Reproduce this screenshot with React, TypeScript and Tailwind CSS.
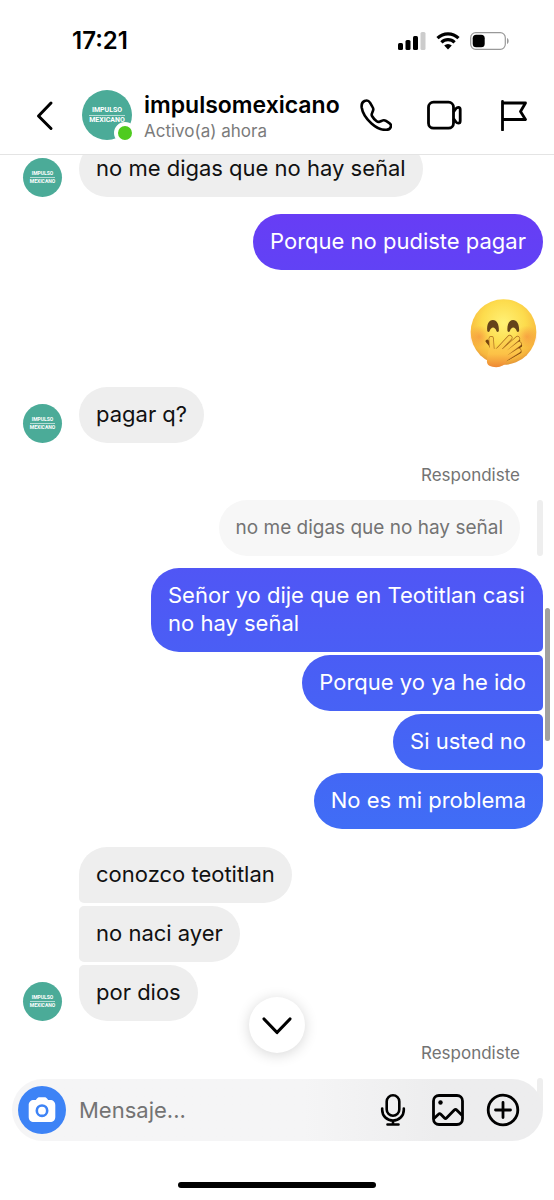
import { useState } from "react";
import type { ReactNode } from "react";
import clsx from "clsx";

interface Message {
  text: string;
  shape: string;
}

interface BubbleProps {
  children: ReactNode;
  className?: string;
}

const replies: Message[] = [
  {
    text: "Señor yo dije que en Teotitlan casi no hay señal",
    shape: "rounded-[28px] rounded-br-[5px] from-[#5056f5] to-[#4a5ef5]",
  },
  {
    text: "Porque yo ya he ido",
    shape: "rounded-[28px] rounded-r-[5px] from-[#4a5df5] to-[#4762f5]",
  },
  {
    text: "Si usted no",
    shape: "rounded-[28px] rounded-r-[5px] from-[#4762f5] to-[#4367f5]",
  },
  {
    text: "No es mi problema",
    shape: "rounded-[28px] rounded-tr-[5px] from-[#4367f5] to-[#406df6]",
  },
];

function Logo({ large = false }: { large?: boolean }) {
  return (
    <div
      className={clsx(
        "flex shrink-0 flex-col items-center justify-center rounded-full bg-[#4bab98] text-center font-['Liberation_Sans_Narrow','Roboto',sans-serif] font-bold text-white",
        large ? "size-[50px] text-[7px]" : "size-[39px] text-[5px]"
      )}
    >
      <span className={large ? "leading-[9px]" : "leading-[7px]"}>IMPULSO</span>
      <span
        className={clsx(
          "border-t border-white/60",
          large ? "leading-[9px]" : "leading-[7px]"
        )}
      >
        MEXICANO
      </span>
    </div>
  );
}

function Received({ children, className = "rounded-[28px]" }: BubbleProps) {
  return (
    <p
      className={clsx(
        "bg-[#eeeeee] px-[17px] pt-[13px] pb-[15px] text-[22px] leading-7 text-[#111111]",
        className
      )}
    >
      {children}
    </p>
  );
}

function Sent({ children, className }: BubbleProps) {
  return (
    <p
      className={clsx(
        "max-w-[392px] bg-linear-to-b px-[17px] pt-[13px] pb-[15px] text-[22px] leading-7 text-white",
        className
      )}
    >
      {children}
    </p>
  );
}

function ReplyLabel() {
  return (
    <p className="mt-[22px] mb-[15px] pr-[23px] text-right text-[17px] leading-5 text-[#737373]">
      Respondiste
    </p>
  );
}

function GiggleEmoji() {
  return (
    <svg
      viewBox="88 52 202 210"
      className="h-[70px] w-[67px]"
      role="img"
      aria-label="Cara con la mano sobre la boca"
    >
      <defs>
        <radialGradient id="face" cx="0.5" cy="0.36" r="0.66">
          <stop offset="0" stopColor="#fff176" />
          <stop offset="0.5" stopColor="#fddc4d" />
          <stop offset="0.85" stopColor="#f7b63d" />
          <stop offset="1" stopColor="#de8d35" />
        </radialGradient>
        <radialGradient id="blush">
          <stop offset="0" stopColor="#f47a3c" stopOpacity="0.5" />
          <stop offset="1" stopColor="#f47a3c" stopOpacity="0" />
        </radialGradient>
        <linearGradient
          id="hand"
          gradientUnits="userSpaceOnUse"
          x1="0"
          y1="160"
          x2="0"
          y2="260"
        >
          <stop offset="0" stopColor="#fddb55" />
          <stop offset="0.6" stopColor="#fcc247" />
          <stop offset="1" stopColor="#ee8834" />
        </linearGradient>
      </defs>
      <circle cx="189" cy="154" r="99" fill="url(#face)" />
      <circle cx="116" cy="168" r="34" fill="url(#blush)" />
      <circle cx="260" cy="168" r="34" fill="url(#blush)" />
      {/* eyes */}
      <path
        d="M140 151c-2-20 5-33 17-33s19 13 18 33c-2 4-5 4-7 1-5-15-16-15-21 0-2 3-5 3-7-1z"
        fill="#65431a"
      />
      <path
        d="M201 151c-2-20 5-33 17-33s19 13 18 33c-2 4-5 4-7 1-5-15-16-15-21 0-2 3-5 3-7-1z"
        fill="#65431a"
      />
      {/* open mouth showing between the fingers */}
      <path
        d="M140 182l10 12M200 204l34-25M204 219l36-24M204 233l34-19"
        stroke="#74430f"
        strokeWidth="10"
        strokeLinecap="round"
      />
      {/* hand: shaded edges first, then the skin */}
      <g fill="none" strokeLinecap="round" strokeLinejoin="round">
        <path
          d="M160 222L208 171M172 226L231 174M180 232L236 190M184 242L235 210M156 240L152 174"
          stroke="#a9681c"
          strokeWidth="16"
        />
        <path
          d="M160 222L208 171M172 226L231 174M180 232L236 190M184 242L235 210M156 240L152 174"
          stroke="url(#hand)"
          strokeWidth="12"
        />
      </g>
      <path
        d="M146 200c4 2 10 4 17 5 14-4 24-1 32 8 8 9 10 18 5 28-6 12-17 19-33 19-17 0-28-6-28-17 0-15 4-28 7-43z"
        fill="url(#hand)"
      />
    </svg>
  );
}

function StatusBar() {
  return (
    <div className="flex h-[76px] items-start justify-between pt-[27px] pr-[45px] pl-[72px]">
      <span className="text-2xl leading-7 font-semibold">17:21</span>
      <div className="flex h-7 items-center gap-[10px]">
        <svg viewBox="0 0 28 18" className="h-[18px] w-7">
          <rect x="0" y="11" width="5" height="7" rx="1.5" />
          <rect x="7.5" y="8" width="5" height="10" rx="1.5" />
          <rect x="15" y="4" width="5" height="14" rx="1.5" />
          <rect x="22.5" width="5" height="18" rx="1.5" fill="#cccccc" />
        </svg>
        <svg viewBox="0 0 24 18" className="h-[18px] w-6">
          <path
            d="M1.5 6.2a15 15 0 0 1 21 0M5.4 10.4a9.4 9.4 0 0 1 13.2 0"
            fill="none"
            stroke="black"
            strokeWidth="3.2"
          />
          <path d="M12 17.5l-3.8-3.900a5.4 5.4 0 0 1 7.6 0z" />
        </svg>
        <svg viewBox="0 0 39 18" className="h-[18px] w-[39px]">
          <rect
            x="0.7"
            y="0.7"
            width="34.6"
            height="16.6"
            rx="5"
            fill="none"
            stroke="#999999"
            strokeWidth="1.2"
          />
          <rect x="2.7" y="2.7" width="12" height="12.6" rx="3.5" />
          <path d="M37 6v6c2.200-1 2.200-5 0-6z" fill="#999999" />
        </svg>
      </div>
    </div>
  );
}

function ChatHeader() {
  return (
    <header className="border-b border-[#e4e4e4] bg-white">
      <StatusBar />
      <div className="flex h-[78px] items-center pr-6 pl-[29px]">
        <button type="button" aria-label="Volver" className="mr-[21px]">
          <svg
            viewBox="0 0 32 32"
            className="size-8"
            fill="none"
            stroke="black"
            strokeWidth="3"
            strokeLinecap="round"
            strokeLinejoin="round"
          >
            <path d="M22 4L9.500 17 22 29.500" />
          </svg>
        </button>
        <div className="relative">
          <Logo large />
          <span className="absolute -right-1 -bottom-1 size-[22px] rounded-full border-4 border-white bg-[#4fcb1f]"></span>
        </div>
        <div className="ml-3 min-w-0 flex-1 pt-1">
          <h1 className="text-[23px] leading-7 font-semibold">
            impulsomexicano
          </h1>
          <p className="text-[17px] leading-6 text-[#7b7b7b]">
            Activo(a) ahora
          </p>
        </div>
        <div className="flex gap-[37px]">
          <button type="button" aria-label="Llamar">
            <svg
              viewBox="0 0 32 32"
              className="size-8"
              fill="none"
              stroke="black"
              strokeWidth="2.6"
              strokeLinejoin="round"
            >
              <path d="M4.500 2C2.200 3 1.300 5.200 1.700 8.500 2.500 14 6.500 20 11.500 24.500c5 4.500 10.500 6.700 15 6.300 2.300-.2 4-1.500 4.400-3.300.3-1.400-.2-2.500-1.600-3.400l-3.300-2.200c-1.300-.8-2.600-.9-4-.2l-2.500 1c-1 .4-1.900.2-2.800-.5-2.100-1.600-3.700-3.400-4.700-5.200-.5-1-.5-1.700 0-2.700l1-2.500c.5-1.300.4-2.500-.4-3.700L10 3.600C8.700 1.600 6.700 1 4.500 2z" />
            </svg>
          </button>
          <button type="button" aria-label="Videollamada">
            <svg
              viewBox="0 0 36 32"
              className="-mx-0.5 h-8 w-9"
              fill="none"
              stroke="black"
              strokeWidth="2.8"
              strokeLinejoin="round"
            >
              <rect x="1.5" y="3.2" width="25" height="26" rx="5" />
              <path d="M26.500 13l2.500-3.500c.8-1 1.500-1.200 2.400-1.200 1.200 0 1.800.9 1.800 2.200v11.500c0 1.300-.6 2.200-1.800 2.200-.9 0-1.600-.2-2.400-1.200l-2.500-3.500" />
            </svg>
          </button>
          <button type="button" aria-label="Reportar">
            <svg
              viewBox="0 0 32 32"
              className="size-8"
              fill="none"
              stroke="black"
              strokeWidth="2.8"
              strokeLinecap="round"
              strokeLinejoin="round"
            >
              <path d="M4.500 2.500V31M4.500 4h23L22.500 12.500l5 8h-23" />
            </svg>
          </button>
        </div>
      </div>
    </header>
  );
}

function Composer() {
  const [draft, setDraft] = useState<string>("");

  return (
    <form
      className="relative mr-[11px] ml-3 flex h-[62px] items-center rounded-full bg-linear-to-r from-[#f5f5f6] from-55% to-[#ededee] to-80% pr-[23px] pl-1.5"
      onSubmit={(e) => e.preventDefault()}
    >
      <button
        type="button"
        aria-label="Cámara"
        className="flex size-12 shrink-0 items-center justify-center rounded-full bg-[#3d83f6]"
      >
        <svg viewBox="0 0 28 26" className="h-[26px] w-7" fill="white">
          <path d="M9 1.500C9.700.6 10.500.3 11.500.3h5c1 0 1.800.3 2.500 1.200l1.200 1.500H22c3.300 0 5.300 2 5.300 5.300v11.400c0 3.300-2 5.300-5.300 5.300H6C2.700 25 .7 23 .7 19.700V8.300C.7 5 2.700 3 6 3h1.800z" />
          <circle
            cx="14"
            cy="13.7"
            r="5.2"
            stroke="#3d83f6"
            strokeWidth="2.6"
          />
        </svg>
      </button>
      <input
        aria-label="Mensaje"
        className="ml-[13px] w-0 min-w-0 flex-1 bg-transparent text-[22px] leading-7 text-black placeholder:text-[#737373] focus:outline-none"
        value={draft}
        placeholder="Mensaje..."
        autoComplete="off"
        onChange={(e) => setDraft(e.target.value)}
      />
      <div className="flex gap-[21px]">
        <button type="button" aria-label="Grabar audio">
          <svg
            viewBox="0 0 34 34"
            className="size-[34px]"
            fill="none"
            stroke="black"
            strokeWidth="2.6"
            strokeLinecap="round"
          >
            <rect x="10.700" y="2.300" width="12.600" height="20.500" rx="6.300" />
            <path d="M6.200 15.500V17c0 6 4.800 10.500 10.800 10.500S27.800 23 27.800 17v-1.500M17 27.500v4M11.500 31.500h11" />
          </svg>
        </button>
        <button type="button" aria-label="Galería">
          <svg
            viewBox="0 0 34 34"
            className="size-[34px]"
            fill="none"
            stroke="black"
            strokeWidth="2.8"
            strokeLinejoin="round"
          >
            <rect x="2.500" y="2.500" width="29" height="29" rx="5.500" />
            <path d="M3 25.500l4.500-4.300c.8-.8 1.500-.8 2.300 0l3.700 3.800c.7.700 1.300.7 2 0l7.800-8c.9-.9 1.600-.9 2.400 0l5.300 5.300" />
            <circle cx="9.500" cy="9.500" r="2.200" fill="black" stroke="none" />
          </svg>
        </button>
        <button type="button" aria-label="Más opciones">
          <svg
            viewBox="0 0 34 34"
            className="size-[34px]"
            fill="none"
            stroke="black"
            strokeWidth="2.8"
            strokeLinecap="round"
          >
            <circle cx="17" cy="17" r="14.8" />
            <path d="M17 9.500v15M9.500 17h15" />
          </svg>
        </button>
      </div>
    </form>
  );
}

export default function App() {
  return (
    <div className="flex min-h-screen flex-col bg-white font-['Inter',sans-serif] text-black">
      <ChatHeader />
      <main className="relative overflow-hidden pr-[11px] pl-[23px]">
        {/* The oldest message is partly scrolled under the header */}
        <div className="-mt-3.5 flex items-end gap-[17px]">
          <Logo />
          <Received>no me digas que no hay señal</Received>
        </div>
        <div className="mt-[17px] flex justify-end">
          <Sent className="rounded-[28px] from-[#673df5] to-[#6142f5]">
            Porque no pudiste pagar
          </Sent>
        </div>
        <div className="mt-7 flex justify-end pr-1.5">
          <GiggleEmoji />
        </div>
        <div className="mt-[19px] flex items-end gap-[17px]">
          <Logo />
          <Received>pagar q?</Received>
        </div>

        <ReplyLabel />
        <div className="flex justify-end gap-[17px]">
          <p className="rounded-[28px] bg-[#f7f7f7] px-[17px] py-3.5 text-[19px] leading-7 text-[#737373]">
            no me digas que no hay señal
          </p>
          <div className="w-1.5 rounded-full bg-[#eeeeee]"></div>
        </div>
        <div className="mt-3 flex flex-col items-end gap-[3px]">
          {replies.map((reply) => (
            <Sent key={reply.text} className={reply.shape}>
              {reply.text}
            </Sent>
          ))}
        </div>

        <div className="mt-[18px] flex items-end gap-[17px]">
          <Logo />
          <div className="flex flex-col items-start gap-[3px]">
            <Received className="rounded-[28px] rounded-bl-[5px]">
              conozco teotitlan
            </Received>
            <Received className="rounded-[28px] rounded-l-[5px]">
              no naci ayer
            </Received>
            <Received className="rounded-[28px] rounded-tl-[5px]">
              por dios
            </Received>
          </div>
        </div>

        <ReplyLabel />
        <div className="flex justify-end">
          <div className="h-8 w-1.5 rounded-t-full bg-[#eeeeee]"></div>
        </div>

        {/* Scroll position */}
        <div className="absolute top-[453px] right-1 h-[133px] w-[5px] rounded-full bg-[#a0a0a0]"></div>
      </main>

      {/* Composer floats over the end of the thread */}
      <footer className="relative -mt-[31px] flex flex-col">
        <button
          type="button"
          aria-label="Ir al último mensaje"
          className="absolute -top-[82px] left-1/2 flex size-14 -translate-x-1/2 items-center justify-center rounded-full bg-white shadow-[0_2px_14px_rgba(0,0,0,0.16)]"
        >
          <svg
            viewBox="0 0 32 32"
            className="size-8"
            fill="none"
            stroke="black"
            strokeWidth="3.2"
            strokeLinecap="round"
            strokeLinejoin="round"
          >
            <path d="M3 10L16 23.500 29 10" />
          </svg>
        </button>
        <Composer />
        <div className="mt-[41px] mb-[11px] h-1.5 w-[198px] self-center rounded-full bg-black"></div>
      </footer>
    </div>
  );
}
